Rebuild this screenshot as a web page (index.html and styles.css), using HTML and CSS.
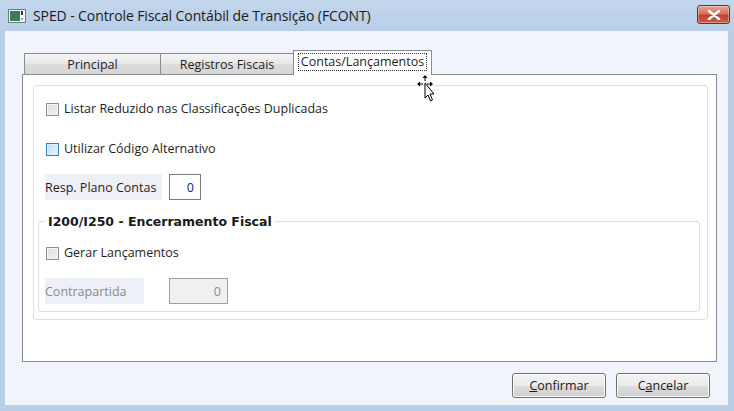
FILE: index.html
```html
<!DOCTYPE html>
<html lang="pt">
<head>
<meta charset="utf-8">
<title>SPED - Controle Fiscal Contábil de Transição (FCONT)</title>
<link rel="stylesheet" href="styles.css">
</head>
<body>
<div class="window">
  <div class="titlebar">
    <svg class="app-icon" width="18" height="14" viewBox="0 0 18 14">
      <rect x="0.5" y="0.5" width="17" height="13" fill="#f4f6f4" stroke="#6d7a80"/>
      <rect x="2" y="2" width="10" height="10" fill="#3f7a5a"/>
      <rect x="13" y="2" width="2" height="4" fill="#3a3a3a"/>
      <rect x="13" y="9" width="2" height="2" fill="#8aa"/>
    </svg>
    <span class="title">SPED - Controle Fiscal Contábil de Transição (FCONT)</span>
    <div class="close-btn">
      <svg width="14" height="10" viewBox="0 0 14 10">
        <path d="M2 1 L12 9 M12 1 L2 9" stroke="#fff" stroke-width="2.6" stroke-linecap="round"/>
      </svg>
    </div>
  </div>
  <div class="client">
    <div class="tabs">
      <div class="tab">Principal</div>
      <div class="tab">Registros Fiscais</div>
      <div class="tab active"><span class="focus">Contas/Lançamentos</span></div>
    </div>
    <div class="panel">
      <div class="inner">
        <label class="check-row first"><span class="cb"></span>Listar Reduzido nas Classificações Duplicadas</label>
        <label class="check-row second"><span class="cb hover"></span>Utilizar Código Alternativo</label>
        <div class="field-row">
          <span class="field-label">Resp. Plano Contas</span>
          <span class="input small">0</span>
        </div>
        <fieldset class="group">
          <legend>I200/I250 - Encerramento Fiscal</legend>
          <label class="check-row"><span class="cb"></span>Gerar Lançamentos</label>
          <div class="field-row disabled">
            <span class="field-label wide">Contrapartida</span>
            <span class="input medium disabled">0</span>
          </div>
        </fieldset>
      </div>
    </div>
    <div class="footer">
      <button class="btn"><u>C</u>onfirmar</button>
      <button class="btn">C<u>a</u>ncelar</button>
    </div>
  </div>
  <svg class="cursor" width="20" height="28" viewBox="0 0 20 28">
    <g fill="#000">
      <path d="M8 0 L10.5 3 L8.5 3 L8.5 6 L7.5 6 L7.5 3 L5.5 3 Z"/>
      <path d="M0 9 L3 6.5 L3 8.5 L6 8.5 L6 9.5 L3 9.5 L3 11.5 Z"/>
      <path d="M16 9 L13 6.5 L13 8.5 L10 8.5 L10 9.5 L13 9.5 L13 11.5 Z"/>
    </g>
    <path d="M8 8 L8 23 L11 20 L13.5 26 L15.5 25 L13 19 L17 19 Z" fill="#fff" stroke="#000" stroke-width="1"/>
  </svg>
</div>
</body>
</html>
```
FILE: styles.css
```css
* { box-sizing: border-box; }
html, body { margin: 0; padding: 0; }
body {
  width: 734px;
  height: 411px;
  overflow: hidden;
  font-family: "Open Sans", "Noto Sans", sans-serif;
  font-size: 12.5px;
  color: #1e1e1e;
}
.window {
  position: relative;
  width: 734px;
  height: 411px;
  background: linear-gradient(to bottom, #c2d6ec 0, #b9cfe8 30px, #b8cfe9 100%);
  display: flex;
  flex-direction: column;
}
.titlebar {
  height: 31px;
  display: flex;
  align-items: center;
  padding-left: 8px;
  padding-right: 6px;
}
.app-icon { margin-top: 1px; }
.title {
  margin-left: 7px;
  font-size: 14px;
  color: #1a1a1a;
  letter-spacing: -0.1px;
}
.close-btn {
  margin-left: auto;
  width: 33px;
  height: 19px;
  margin-top: -2px;
  margin-right: -2px;
  border: 1px solid #7a2a22;
  border-radius: 3px;
  background: linear-gradient(to bottom, #e8a593 0, #d8725d 45%, #c0432c 55%, #cf5d43 100%);
  display: flex;
  align-items: center;
  justify-content: center;
  box-shadow: inset 0 0 0 1px rgba(255,255,255,0.35);
}
.client {
  flex: 1;
  margin: 0 6px 6px 5px;
  background: #f1f4fa;
  padding: 19px 11px 0 17px;
  display: flex;
  flex-direction: column;
}
.tabs {
  display: flex;
  align-items: flex-end;
  height: 24px;
  padding-left: 2px;
  position: relative;
  z-index: 1;
}
.tab {
  height: 21px;
  border: 1px solid #898c95;
  border-bottom: none;
  background: linear-gradient(to bottom, #f4f4f4 0, #e7e7e7 50%, #dcdcdc 51%, #d6d6d6 100%);
  display: flex;
  align-items: center;
  justify-content: center;
  margin-right: -1px;
  padding-top: 1px;
}
.tab:nth-child(1) { width: 137px; }
.tab:nth-child(2) { width: 134px; }
.tab.active {
  width: 139px;
  height: 25px;
  background: #fff;
  margin-bottom: -1px;
  align-items: flex-start;
  padding-top: 2px;
}
.tab .focus {
  border: 1px dotted #333;
  padding: 0 2px;
  line-height: 16px;
}
.panel {
  height: 288px;
  background: #fff;
  border: 1px solid #898c95;
  padding: 10px 8px 41px 10px;
}
.inner {
  height: 100%;
  border: 1px solid #dcdfe5;
  border-radius: 3px;
  padding: 16px 0 0 12px;
}
.check-row {
  display: flex;
  align-items: center;
  height: 14px;
  line-height: 14px;
}
.check-row.second { margin-top: 26px; }
.cb {
  width: 13px;
  height: 13px;
  border: 1px solid #8e8f8f;
  background: linear-gradient(135deg, #dcdcdc 0, #f2f2f2 100%);
  box-shadow: inset 0 0 0 1px #f4f4f4;
  margin-right: 5px;
  flex: none;
}
.cb.hover {
  border-color: #3c7fb1;
  background: linear-gradient(135deg, #b9defa 0, #e8f5fd 100%);
  box-shadow: inset 0 0 0 1px #def0fc;
}
.field-row {
  display: flex;
  align-items: center;
  margin-top: 18px;
  margin-left: -1px;
}
.field-label {
  background: #eef0f8;
  height: 26px;
  width: 117px;
  display: flex;
  align-items: center;
}
.field-label.wide { width: 99px; color: #8a8a8a; }
.input {
  height: 26px;
  border: 1px solid #7a7a7a;
  display: flex;
  align-items: center;
  justify-content: flex-end;
  padding-right: 6px;
  color: #1c1c8c;
  background: #fff;
}
.input.small { width: 32px; margin-left: 7px; }
.input.medium { width: 59px; margin-left: 25px; }
.input.disabled {
  background: #f0f0f0;
  color: #8a8a8a;
  border-color: #a0a0a0;
}
.group {
  margin: 14px 7px 0 -8px;
  border: 1px solid #dcdfe5;
  border-radius: 3px;
  padding: 17px 0 0 7px;
  height: 98px;
}
.group legend {
  font-family: "DejaVu Sans", sans-serif;
  font-weight: bold;
  font-size: 12.5px;
  padding: 0 3px;
  margin-left: -1px;
  color: #1a1a1a;
}
.group .field-row { margin-top: 18px; }
.footer {
  display: flex;
  justify-content: flex-end;
  gap: 10px;
  padding: 11px 7px 0 0;
}
.btn {
  width: 94px;
  height: 25px;
  font-family: "Open Sans", "Noto Sans", sans-serif;
  font-size: 12.5px;
  color: #1a1a1a;
  border: 1px solid #707070;
  border-radius: 3px;
  background: linear-gradient(to bottom, #f2f2f2 0, #ebebeb 50%, #dddddd 51%, #cfcfcf 100%);
  box-shadow: inset 0 0 0 1px #fcfcfc;
  padding: 0;
}
.btn u { text-decoration: underline; }
.cursor {
  position: absolute;
  left: 417px;
  top: 75px;
}
```
